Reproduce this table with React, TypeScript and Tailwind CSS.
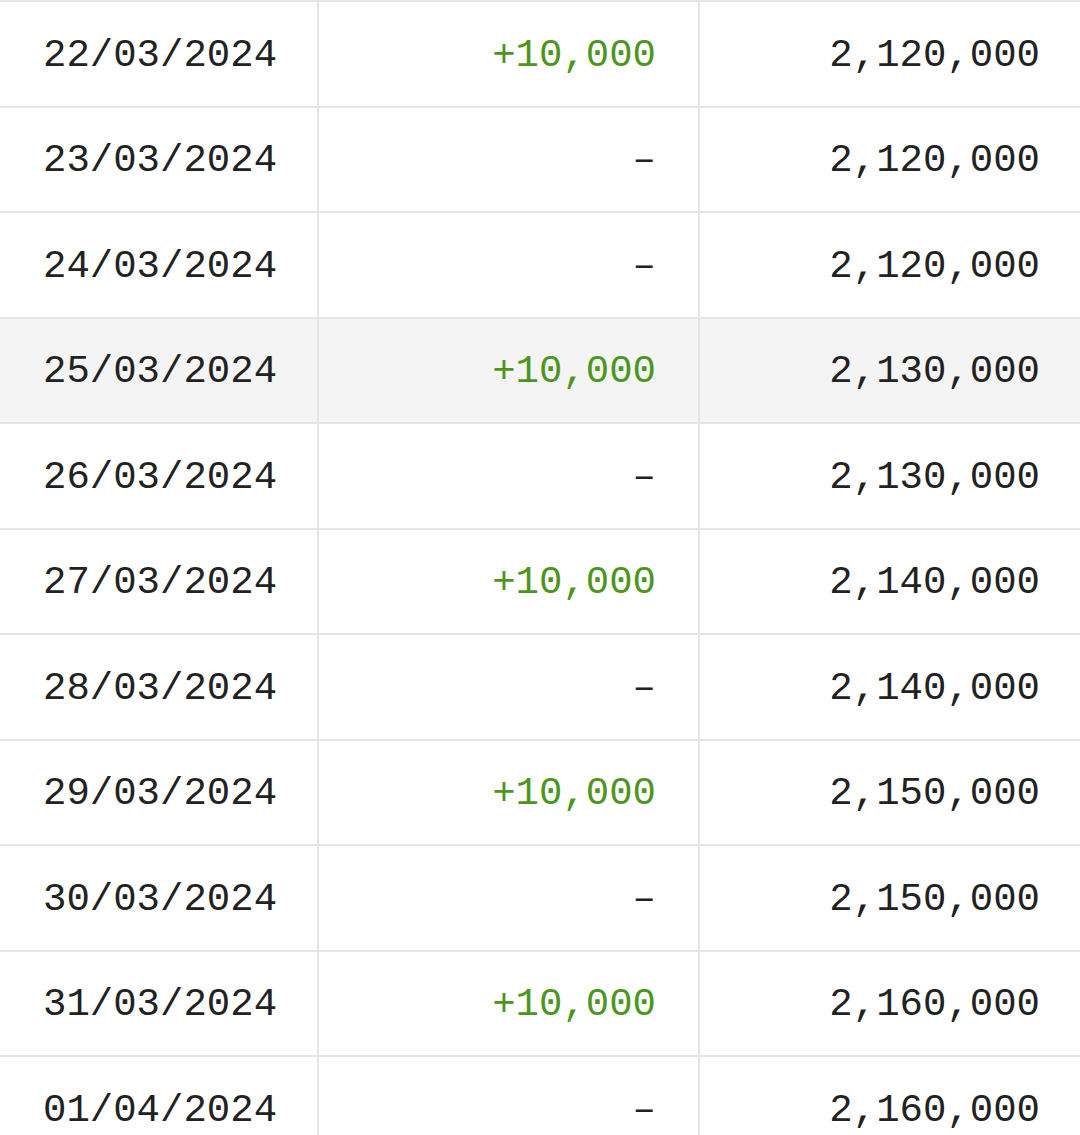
import React from "react";

type Row = { date: string; change?: string; balance: string; highlight?: boolean };

const rows: Row[] = [
  { date: "22/03/2024", change: "+10,000", balance: "2,120,000" },
  { date: "23/03/2024", balance: "2,120,000" },
  { date: "24/03/2024", balance: "2,120,000" },
  { date: "25/03/2024", change: "+10,000", balance: "2,130,000", highlight: true },
  { date: "26/03/2024", balance: "2,130,000" },
  { date: "27/03/2024", change: "+10,000", balance: "2,140,000" },
  { date: "28/03/2024", balance: "2,140,000" },
  { date: "29/03/2024", change: "+10,000", balance: "2,150,000" },
  { date: "30/03/2024", balance: "2,150,000" },
  { date: "31/03/2024", change: "+10,000", balance: "2,160,000" },
  { date: "01/04/2024", balance: "2,160,000" },
];

export default function App() {
  return (
    <div className="w-[1080px] h-[1135px] overflow-hidden bg-white font-['Liberation_Mono',monospace] text-[39px] text-[#222222]">
      {rows.map((r) => (
        <div
          key={r.date}
          className={`grid grid-cols-[319px_381px_380px] h-[105.5px] border-t-2 border-[#e5e5e5] ${
            r.highlight ? "bg-[#f4f4f4]" : "bg-white"
          }`}
        >
          <div className="flex items-center pt-[4px] pl-[43px] border-r-2 border-[#e5e5e5]">{r.date}</div>
          <div className="flex items-center justify-end pt-[4px] pr-[42px] border-r-2 border-[#e5e5e5]">
            {r.change ? <span className="text-[#4d961e]">{r.change}</span> : <span>–</span>}
          </div>
          <div className="flex items-center justify-end pt-[4px] pr-[40px]">{r.balance}</div>
        </div>
      ))}
    </div>
  );
}
